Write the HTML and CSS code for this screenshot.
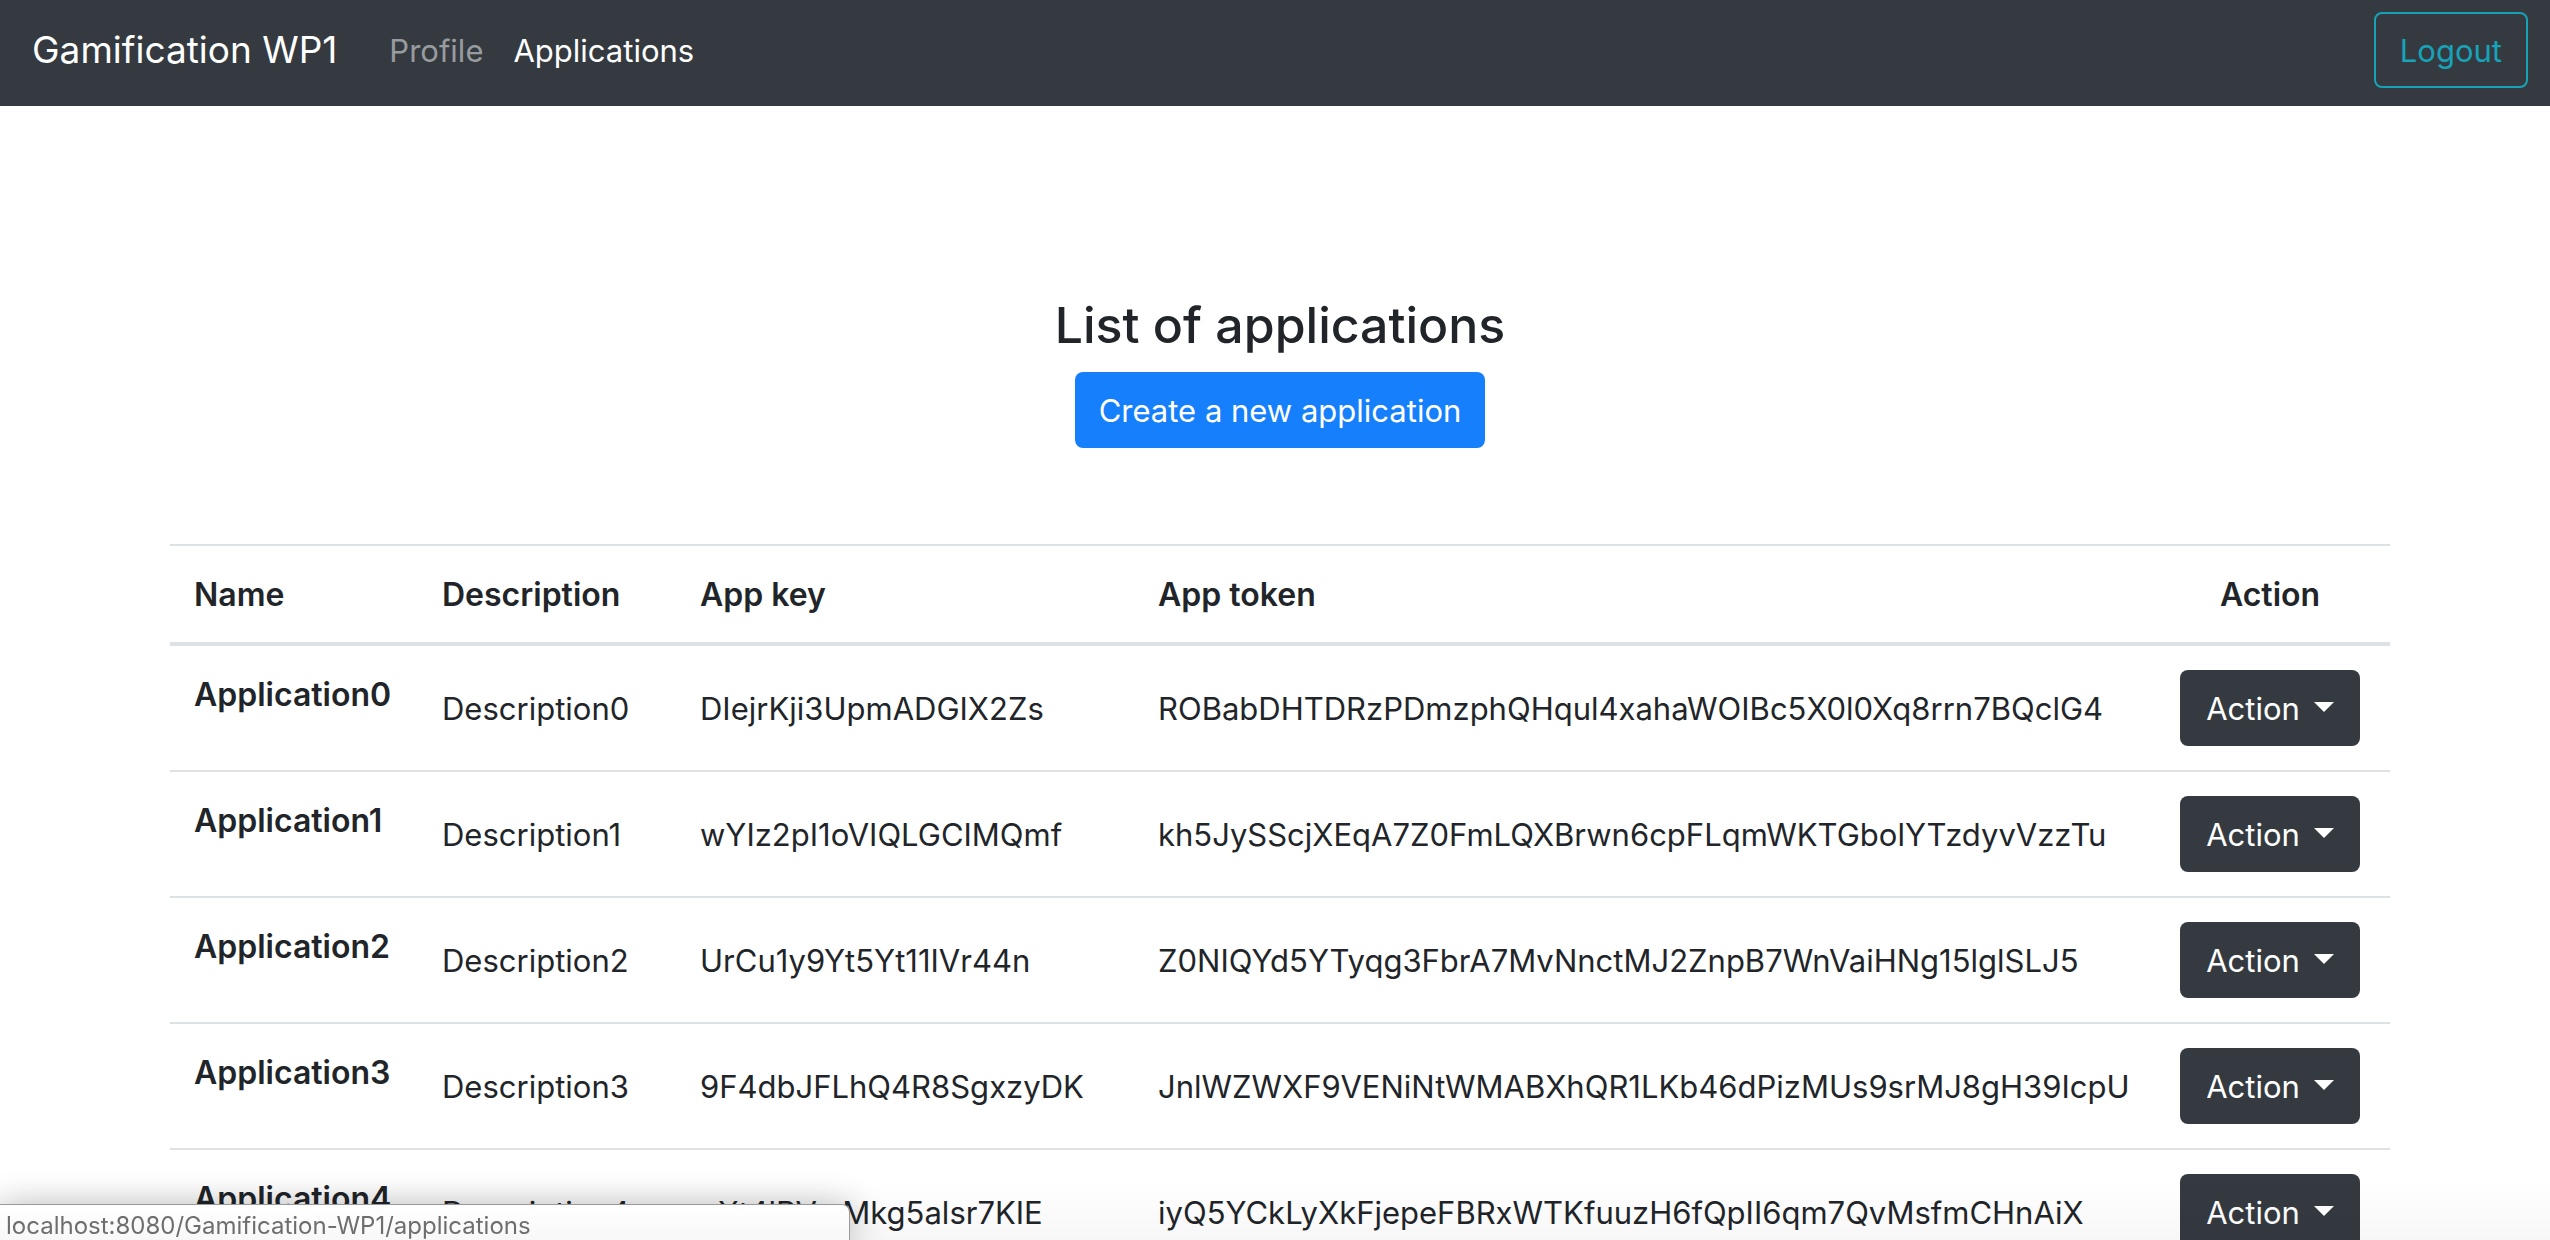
FILE: index.html
```html
<!DOCTYPE html>
<html lang="en">
<head>
<meta charset="utf-8">
<title>Gamification WP1 - Applications</title>
<link rel="stylesheet" href="styles.css">
</head>
<body>
<nav class="navbar">
  <a class="navbar-brand" href="#">Gamification WP1</a>
  <a class="nav-link" href="#">Profile</a>
  <a class="nav-link active" href="#">Applications</a>
  <button class="btn btn-logout" type="button">Logout</button>
</nav>
<main class="container">
  <header class="page-head">
    <h1 class="title">List of applications</h1>
    <button class="btn btn-primary" type="button">Create a new application</button>
  </header>
  <table class="table">
    <colgroup>
      <col class="col-name"><col class="col-desc"><col class="col-key"><col class="col-token"><col class="col-action">
    </colgroup>
    <thead>
      <tr><th>Name</th><th>Description</th><th>App key</th><th>App token</th><th class="center">Action</th></tr>
    </thead>
    <tbody>
      <tr><th scope="row">Application0</th><td>Description0</td><td>DIejrKji3UpmADGIX2Zs</td><td>ROBabDHTDRzPDmzphQHqul4xahaWOIBc5X0l0Xq8rrn7BQclG4</td><td class="center"><button class="btn btn-dark" type="button">Action<span class="caret"></span></button></td></tr>
      <tr><th scope="row">Application1</th><td>Description1</td><td>wYIz2pI1oVIQLGCIMQmf</td><td>kh5JySScjXEqA7Z0FmLQXBrwn6cpFLqmWKTGbolYTzdyvVzzTu</td><td class="center"><button class="btn btn-dark" type="button">Action<span class="caret"></span></button></td></tr>
      <tr><th scope="row">Application2</th><td>Description2</td><td>UrCu1y9Yt5Yt11IVr44n</td><td>Z0NIQYd5YTyqg3FbrA7MvNnctMJ2ZnpB7WnVaiHNg15lglSLJ5</td><td class="center"><button class="btn btn-dark" type="button">Action<span class="caret"></span></button></td></tr>
      <tr><th scope="row">Application3</th><td>Description3</td><td>9F4dbJFLhQ4R8SgxzyDK</td><td>JnlWZWXF9VENiNtWMABXhQR1LKb46dPizMUs9srMJ8gH39IcpU</td><td class="center"><button class="btn btn-dark" type="button">Action<span class="caret"></span></button></td></tr>
      <tr><th scope="row">Application4</th><td>Description4</td><td>oXt4lRVwMkg5alsr7KIE</td><td>iyQ5YCkLyXkFjepeFBRxWTKfuuzH6fQpII6qm7QvMsfmCHnAiX</td><td class="center"><button class="btn btn-dark" type="button">Action<span class="caret"></span></button></td></tr>
    </tbody>
  </table>
</main>
<div class="window-shade"></div>
<div class="status">localhost:8080/Gamification-WP1/applications</div>
</body>
</html>
```
FILE: styles.css
```css
* { box-sizing: border-box; }
html { height: 100%; overflow: hidden; }
body {
  height: 100%;
  margin: 0;
  overflow: hidden;
  background: #fff;
  color: #212529;
  font: 400 31px/48px Inter, "Liberation Sans", sans-serif;
}
.navbar {
  display: flex;
  align-items: center;
  padding: 12px 22px 18px 32px;
  background: #343a40;
}
.navbar-brand {
  margin-right: 36px;
  color: #fff;
  font-size: 37px;
  text-decoration: none;
}
.nav-link {
  padding: 2px 16px 0;
  color: #999c9f;
  text-decoration: none;
}
.nav-link + .nav-link { padding-left: 14px; }
.nav-link.active { color: #fff; }
.btn {
  height: 76px;
  padding: 13px 22px 11px;
  border: 2px solid transparent;
  border-radius: 8px;
  color: #fff;
  font: inherit;
  line-height: 48px;
  white-space: nowrap;
}
.btn-logout {
  margin-left: auto;
  padding-right: 24px;
  padding-left: 24px;
  border-color: #17a2b8;
  background: transparent;
  color: #17a2b8;
}
.btn-primary { background: #167ffc; }
.container {
  max-width: 2230px;
  margin: 0 auto;
  padding: 186px 0 0 10px;
}
.page-head {
  display: flex;
  flex-direction: column;
  align-items: center;
  margin-bottom: 96px;
}
.title {
  margin: 0 0 14px;
  font-size: 50px;
  font-weight: 500;
  line-height: 66px;
}
.table {
  width: 100%;
  table-layout: fixed;
  border-spacing: 0;
}
.col-name { width: 248px; }
.col-desc { width: 258px; }
.col-key { width: 458px; }
.col-action { width: 240px; }
.table th, .table td {
  padding: 25px 24px 23px;
  border-top: 2px solid #dee2e6;
  text-align: left;
  white-space: nowrap;
}
.table th {
  font-size: 32px;
  font-weight: 600;
  vertical-align: top;
}
.table tbody tr:first-child > * { border-top-width: 4px; }
.table td { vertical-align: middle; }
.table th.center { padding: 25px 0 23px; text-align: center; }
.table td.center { padding: 24px 0; text-align: center; }
.btn-dark {
  display: inline-flex;
  align-items: center;
  padding-right: 24px;
  padding-left: 24px;
  background: #343a40;
  vertical-align: top;
}
.caret {
  margin: 0 0 4px 14px;
  border: 10px solid transparent;
  border-top-color: #fff;
  border-bottom: 0;
}
.window-shade {
  position: fixed;
  right: 0;
  bottom: 0;
  left: 0;
  height: 60px;
  background: linear-gradient(transparent, rgba(0, 0, 0, 0.03));
  pointer-events: none;
}
.status {
  position: fixed;
  bottom: 0;
  left: 0;
  width: 850px;
  height: 36px;
  padding-left: 6px;
  border: solid #999;
  border-width: 1px 1px 0 0;
  border-top-right-radius: 8px;
  background: linear-gradient(#fff, #f8f8f8);
  box-shadow: 0 4px 36px rgba(0, 0, 0, 0.32);
  color: #6e6e6e;
  font-size: 24px;
  line-height: 42px;
}
```
